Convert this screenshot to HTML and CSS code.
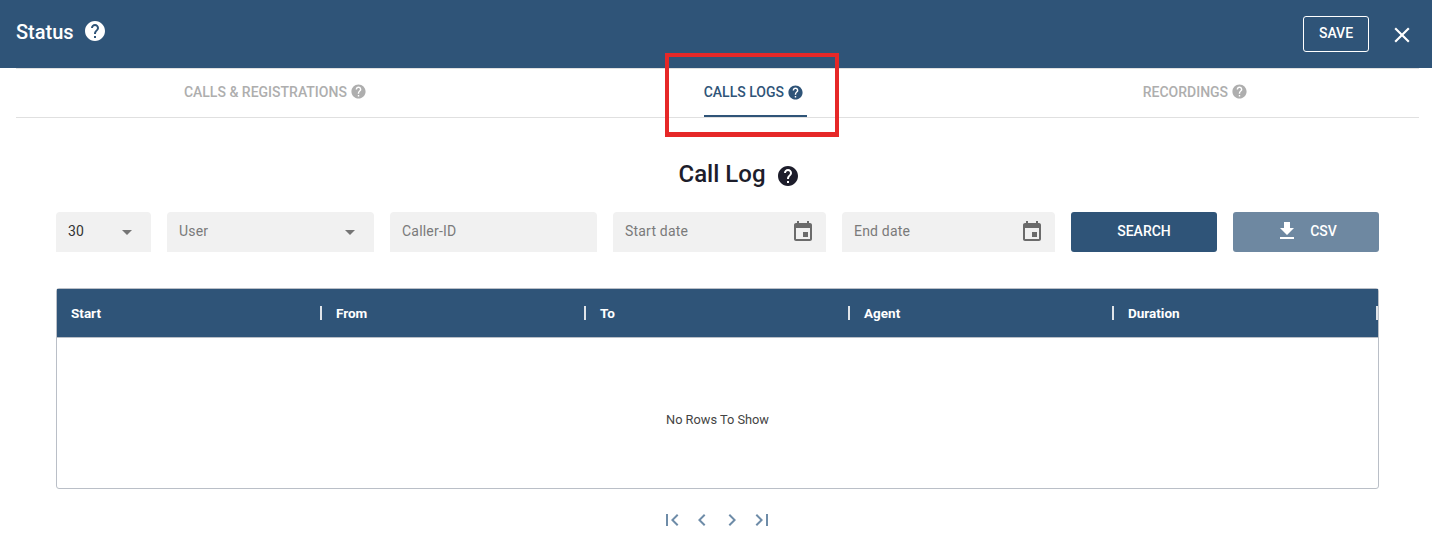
FILE: index.html
```html
<!DOCTYPE html>
<html lang="en">
<head>
    <meta charset="UTF-8">
    <meta name="viewport" content="width=device-width, initial-scale=1.0">
    <title>Status</title>
    <link rel="stylesheet" href="styles.css">
</head>
<body>
    <svg class="icon-defs" width="0" height="0">
        <symbol id="help" viewBox="0 0 24 24">
            <path d="M12 2C6.48 2 2 6.48 2 12s4.48 10 10 10 10-4.48 10-10S17.52 2 12 2zm1 17h-2v-2h2v2zm2.07-7.75l-.9.92C13.45 12.9 13 13.5 13 15h-2v-.5c0-1.1.45-2.1 1.17-2.83l1.24-1.26c.37-.36.59-.86.59-1.41 0-1.1-.9-2-2-2s-2 .9-2 2H8c0-2.21 1.79-4 4-4s4 1.79 4 4c0 .88-.36 1.68-.93 2.25z"/>
        </symbol>
        <symbol id="calendar" viewBox="0 0 24 24">
            <path d="M17 12h-5v5h5v-5zM16 1v2H8V1H6v2H5c-1.11 0-1.99.9-1.99 2L3 19c0 1.1.89 2 2 2h14c1.1 0 2-.9 2-2V5c0-1.1-.9-2-2-2h-1V1h-2zm3 18H5V8h14v11z"/>
        </symbol>
    </svg>

    <header class="top-bar">
        <div class="top-title">
            <h1>Status</h1>
            <svg class="icon-title"><use href="#help"/></svg>
        </div>
        <div class="top-actions">
            <button class="save-button">SAVE</button>
            <svg class="close-icon" viewBox="0 0 24 24"><path d="M19 6.41L17.59 5 12 10.59 6.41 5 5 6.41 10.59 12 5 17.59 6.41 19 12 13.41 17.59 19 19 17.59 13.41 12z"/></svg>
        </div>
    </header>

    <nav class="tabs">
        <a class="tab">CALLS &amp; REGISTRATIONS <svg class="icon-tab"><use href="#help"/></svg></a>
        <a class="tab active">CALLS LOGS <svg class="icon-tab"><use href="#help"/></svg></a>
        <a class="tab">RECORDINGS <svg class="icon-tab"><use href="#help"/></svg></a>
    </nav>
    <div class="highlight-box"></div>

    <main class="content">
        <div class="page-title">
            <h2>Call Log</h2>
            <svg class="icon-heading"><use href="#help"/></svg>
        </div>

        <div class="filters">
            <div class="field field-value">30<span class="caret"></span></div>
            <div class="field">User<span class="caret"></span></div>
            <div class="field">Caller-ID</div>
            <div class="field">Start date<svg class="icon-date"><use href="#calendar"/></svg></div>
            <div class="field">End date<svg class="icon-date"><use href="#calendar"/></svg></div>
            <button class="btn">SEARCH</button>
            <button class="btn btn-muted">
                <svg class="icon-download" viewBox="0 0 24 24"><path d="M19 9h-4V3H9v6H5l7 7 7-7zM5 18v2h14v-2H5z"/></svg>
                CSV
            </button>
        </div>

        <div class="grid">
            <div class="grid-head">
                <div class="grid-col">Start</div>
                <div class="grid-col">From</div>
                <div class="grid-col">To</div>
                <div class="grid-col">Agent</div>
                <div class="grid-col">Duration</div>
            </div>
            <div class="grid-empty">No Rows To Show</div>
        </div>

        <div class="pager">
            <svg viewBox="0 0 24 24"><path d="M18.41 16.59L13.82 12l4.59-4.59L17 6l-6 6 6 6zM6 6h2v12H6z"/></svg>
            <svg viewBox="0 0 24 24"><path d="M15.41 7.41L14 6l-6 6 6 6 1.41-1.41L10.83 12z"/></svg>
            <svg viewBox="0 0 24 24"><path d="M10 6L8.59 7.41 13.17 12l-4.58 4.59L10 18l6-6z"/></svg>
            <svg viewBox="0 0 24 24"><path d="M5.59 7.41L10.18 12l-4.59 4.59L7 18l6-6-6-6zM16 6h2v12h-2z"/></svg>
        </div>
    </main>
</body>
</html>
```

FILE: styles.css
```css
body {
    font-family: Roboto, "Liberation Sans", sans-serif;
    margin: 0;
    padding: 0;
    background-color: #fff;
    color: #1d1d2b;
    position: relative;
    height: 545px;
    overflow: hidden;
}
.icon-defs {
    position: absolute;
}
.top-bar {
    display: flex;
    justify-content: space-between;
    height: 68px;
    background-color: #2f5478;
    color: #fff;
    padding: 0 17px 0 16px;
}
.top-title {
    display: flex;
    align-items: center;
    height: 64px;
}
.top-title h1 {
    margin: 0;
    font-size: 20px;
    font-weight: 500;
}
.icon-title {
    width: 24px;
    height: 24px;
    margin-left: 9px;
    margin-top: -3px;
    fill: #fff;
}
.top-actions {
    display: flex;
    align-items: center;
    height: 68px;
    gap: 20px;
}
.save-button {
    width: 66px;
    height: 36px;
    background: none;
    color: #fff;
    border: 1px solid #fff;
    border-radius: 3px;
    font-family: inherit;
    font-size: 14px;
    font-weight: 500;
    padding: 0 0 2px;
}
.close-icon {
    width: 26px;
    height: 26px;
    margin-top: 1px;
    fill: #fff;
}
.tabs {
    display: flex;
    justify-content: space-around;
    margin: 0 13px 0 16px;
    border-top: 1px solid #e0e0e0;
    border-bottom: 1px solid #e0e0e0;
    box-sizing: border-box;
    height: 50px;
}
.tab {
    display: flex;
    align-items: center;
    gap: 3px;
    height: 47px;
    padding: 0 3px 2px 0;
    box-sizing: border-box;
    font-size: 14px;
    font-weight: 500;
    color: #aeaeae;
    fill: #aeaeae;
}
.tab.active {
    color: #2f5478;
    fill: #2f5478;
    height: 48px;
    margin-left: -2px;
    border-bottom: 2px solid #2f5478;
    padding-bottom: 0;
}
.icon-tab {
    width: 17px;
    height: 17px;
}
.highlight-box {
    position: absolute;
    left: 665px;
    top: 53px;
    width: 166px;
    height: 75px;
    border: 4px solid #e62828;
    border-bottom-width: 5px;
}
.content {
    padding: 0 53px 0 56px;
}
.page-title {
    display: flex;
    justify-content: center;
    align-items: center;
    height: 32px;
    margin-top: 40px;
    padding-left: 43px;
}
.page-title h2 {
    margin: 0;
    font-size: 24px;
    font-weight: 500;
}
.icon-heading {
    width: 24px;
    height: 24px;
    margin-left: 10px;
    margin-top: 3px;
    fill: #1d1d2b;
}
.filters {
    display: grid;
    grid-template-columns: 95px 207px 207px 213px 213px 146px 146px;
    gap: 16px;
    margin-top: 22px;
}
.field {
    display: flex;
    align-items: center;
    justify-content: space-between;
    height: 40px;
    padding: 0 12px 2px;
    box-sizing: border-box;
    background-color: #f1f1f1;
    border-radius: 4px 4px 0 0;
    font-size: 14px;
    color: #7a7a7a;
    letter-spacing: 0.2px;
}
.field-value {
    color: #333;
}
.caret {
    width: 0;
    height: 0;
    margin: 3px 7px 0 0;
    border-left: 5px solid transparent;
    border-right: 5px solid transparent;
    border-top: 5px solid #757575;
}
.icon-date {
    width: 24px;
    height: 24px;
    margin: 2px -1px 0 0;
    fill: #6b6b6b;
}
.btn {
    display: flex;
    align-items: center;
    justify-content: center;
    height: 40px;
    background-color: #2f5478;
    color: #fff;
    border: none;
    border-radius: 3px;
    font-family: inherit;
    font-size: 14px;
    font-weight: 500;
    padding: 0 0 2px;
}
.btn-muted {
    background-color: #6e88a1;
    gap: 11px;
}
.icon-download {
    width: 24px;
    height: 24px;
    fill: #fff;
}
.grid {
    margin-top: 36px;
    height: 201px;
    box-sizing: border-box;
    border: 1px solid #babfc7;
    border-radius: 3px;
    display: flex;
    flex-direction: column;
}
.grid-head {
    display: flex;
    height: 49px;
    box-sizing: border-box;
    border-bottom: 1px solid #babfc7;
    background-color: #2f5478;
}
.grid-col {
    display: flex;
    align-items: center;
    width: 264px;
    box-sizing: border-box;
    padding-left: 14px;
    position: relative;
    font-size: 13.5px;
    font-weight: 700;
    color: #fff;
}
.grid-col::after {
    content: "";
    position: absolute;
    right: -1px;
    top: 17px;
    width: 2px;
    height: 14px;
    background-color: #dfe3e8;
}
.grid-col + .grid-col {
    padding-left: 15px;
}
.grid-empty {
    flex: 1;
    display: flex;
    align-items: center;
    justify-content: center;
    padding-top: 12px;
    font-size: 12.8px;
    color: #444;
}
.pager {
    display: flex;
    justify-content: center;
    gap: 6px;
    margin-top: 19px;
    padding-right: 2px;
    fill: #6e8ca8;
}
.pager svg {
    width: 24px;
    height: 24px;
}
```
